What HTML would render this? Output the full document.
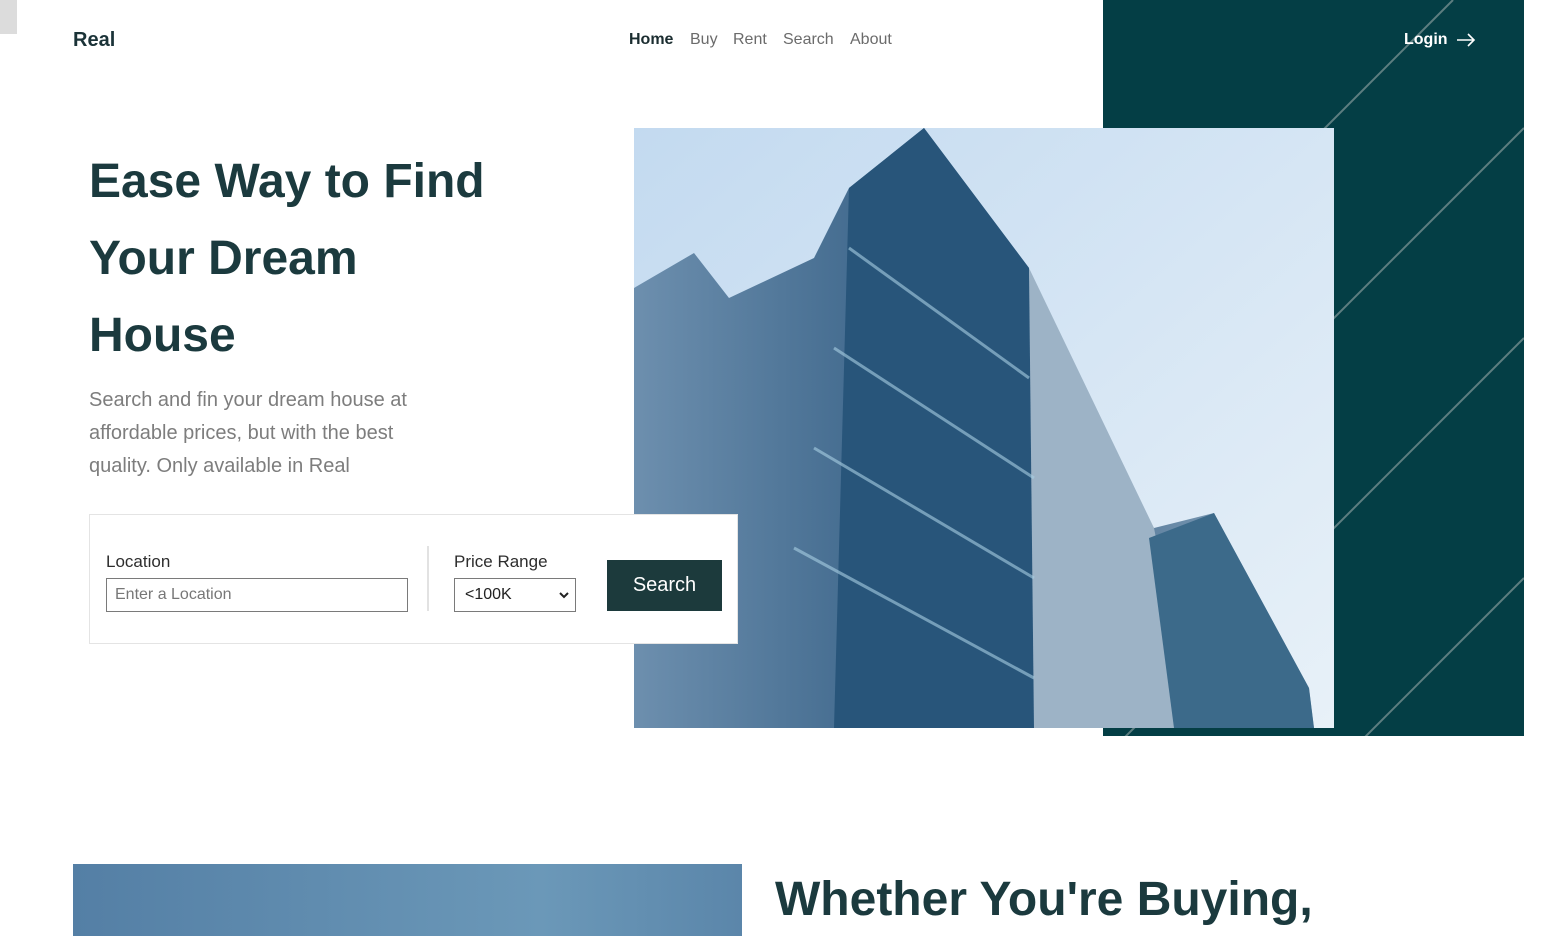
<!DOCTYPE html>
<html><head><meta charset="utf-8"><style>
*{margin:0;padding:0;box-sizing:border-box}
html,body{width:1545px;height:936px;overflow:hidden}
body{background:#fff;font-family:"Liberation Sans",Arial,sans-serif;position:relative;color:#1d3a3c}
.abs{position:absolute}
.nav a{position:absolute;top:31px;font-size:16px;color:#6b6b6b;text-decoration:none}
h1{position:absolute;left:89px;top:143px;font-size:48px;line-height:77px;color:#1b3a3e;font-weight:bold;white-space:nowrap}
.sub{left:89px;top:384px;font-size:20px;line-height:33px;color:#7d7d7d;width:360px}
.card{left:89px;top:514px;width:649px;height:130px;background:#fff;border:1px solid #e4e4e4}
label{position:absolute;font-size:17px;color:#2d2d2d}
</style></head><body>
<div class="abs" style="left:0;top:0;width:17px;height:34px;background:#dcdcdc"></div>
<div class="abs" style="left:73px;top:29px;font-size:20px;font-weight:bold;color:#1b3338">Real</div>
<div class="nav">
<a style="left:629px;color:#1b2d30;font-weight:bold">Home</a>
<a style="left:690px">Buy</a>
<a style="left:733px">Rent</a>
<a style="left:783px">Search</a>
<a style="left:850px">About</a>
</div>
<svg class="abs" style="left:1103px;top:0" width="421" height="736">
<rect width="421" height="736" fill="#043e45"/>
<g stroke="#5d7e80" stroke-width="2">
<line x1="350" y1="0" x2="0" y2="350"/>
<line x1="421" y1="128" x2="0" y2="549"/>
<line x1="421" y1="338" x2="0" y2="759"/>
<line x1="421" y1="578" x2="0" y2="999"/>
</g></svg>
<div class="abs" style="left:1404px;top:31px;font-size:16px;font-weight:bold;color:#fff">Login</div>
<svg class="abs" style="left:1456px;top:32px" width="20" height="16"><path d="M1 8H18M12 2L18 8L12 14" stroke="#fff" stroke-width="1.6" fill="none"/></svg>
<svg class="abs" style="left:634px;top:128px" width="700" height="600">
<defs><linearGradient id="sk" x1="0" y1="0" x2="1" y2="1"><stop offset="0" stop-color="#c3daf0"/><stop offset="1" stop-color="#e8f1f8"/></linearGradient>
<linearGradient id="bd" x1="0" y1="0" x2="1" y2="0"><stop offset="0" stop-color="#6d8fae"/><stop offset=".5" stop-color="#2f5a80"/><stop offset="1" stop-color="#91abc2"/></linearGradient></defs>
<rect width="700" height="600" fill="url(#sk)"/>
<polygon points="0,160 60,125 95,170 180,130 215,60 290,0 395,140 400,290 520,400 580,385 675,560 680,600 0,600" fill="url(#bd)"/>
<polygon points="290,0 395,140 400,600 200,600 215,60" fill="#28557a"/>
<polygon points="395,140 520,400 560,600 400,600" fill="#9db3c6"/>
<polygon points="515,410 580,385 675,560 680,600 540,600" fill="#3c6a8a"/>
<g stroke="#a9d0e4" stroke-width="3" opacity=".6">
<line x1="215" y1="120" x2="395" y2="250"/><line x1="200" y1="220" x2="400" y2="350"/><line x1="180" y1="320" x2="400" y2="450"/><line x1="160" y1="420" x2="400" y2="550"/>
</g></svg>
<h1>Ease Way to Find<br>Your Dream<br>House</h1>
<div class="abs sub">Search and fin your dream house at affordable prices, but with the best quality. Only available in Real</div>
<div class="abs card">
<label style="left:16px;top:37px">Location</label>
<div class="abs" style="left:16px;top:63px;width:302px;height:34px;border:1px solid #7a7a7a;font-size:16px;color:#777;padding:7px 8px">Enter a Location</div>
<div class="abs" style="left:337px;top:31px;width:2px;height:65px;background:#e2e2e2"></div>
<label style="left:364px;top:37px">Price Range</label>
<div class="abs" style="left:364px;top:63px;width:122px;height:34px;border:1px solid #7a7a7a;font-size:16px;color:#222;padding:7px 10px">&lt;100K<svg style="position:absolute;right:6px;top:12px" width="10" height="8"><path d="M1 2L5 6L9 2" stroke="#222" stroke-width="2" fill="none"/></svg></div>
<div class="abs" style="left:517px;top:45px;width:115px;height:51px;background:#1c3a3c;color:#fff;font-size:20px;text-align:center;line-height:51px">Search</div>
</div>
<div class="abs" style="left:73px;top:864px;width:669px;height:72px;background:linear-gradient(90deg,#547fa5,#6b98b8 70%,#5b86aa)"></div>
<div class="abs" style="left:775px;top:872px;font-size:48px;font-weight:bold;color:#1b3a3e;white-space:nowrap">Whether You're Buying,</div>
</body></html>
